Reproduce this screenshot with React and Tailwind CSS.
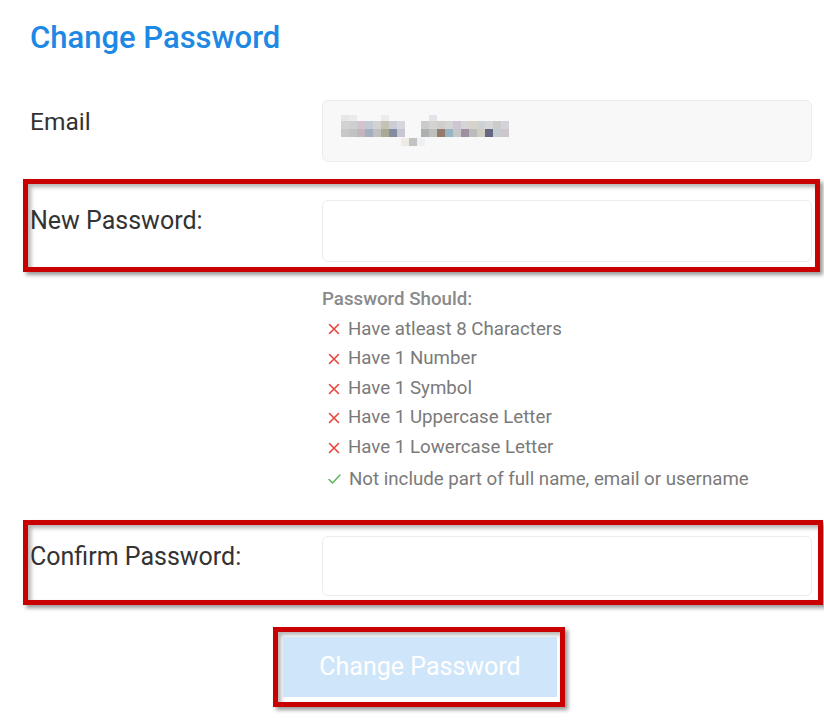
import React from "react";

const rules = [
  { ok: false, text: "Have atleast 8 Characters" },
  { ok: false, text: "Have 1 Number" },
  { ok: false, text: "Have 1 Symbol" },
  { ok: false, text: "Have 1 Uppercase Letter" },
  { ok: false, text: "Have 1 Lowercase Letter" },
  { ok: true, text: "Not include part of full name, email or username" },
];

// pixelated (blurred) email value
const mosaicTop = [
  "#e6e6e6", "#ebebef", "", "", "", "#efebeb", "", "", "", "", "", "#e6e2ea", "", "", "", "", "", "", "", "", "", "",
];
const mosaicRow1 = [
  "#d2d2d2", "#cfcfcf", "#d2c3cc", "#c2cad6", "#d2d2d2", "#c2c3b2", "#cdccd6", "#d6d7dc", "", "", "#cacbca", "#d3d4d2", "#d1cdca", "#d3d5d4", "#cfc5d5", "#d5d5d5", "#d7d3c9", "#cdd1d6", "#d6d6d6", "#cbcbcb", "#d3d4d9", "",
];
const mosaicRow2 = [
  "#c8c8c8", "#c1c3c3", "#c4b4be", "#a2afbf", "#c0c0c0", "#aaa993", "#838ca0", "#c8c5d4", "", "", "#adb0ae", "#bcc1bc", "#957a6e", "#98b3c4", "#c6c6c6", "#9f8fa2", "#bcbcbc", "#d0cdc2", "#65667f", "#c6cbd3", "#cdc7cc", "",
];
const mosaicBottom = { 8: "#f0eae5", 9: "#c3c3c3", 10: "#eef1f4" };

function Mosaic() {
  return (
    <svg width="176" height="32" viewBox="0 0 176 32">
      {mosaicTop.map((c, i) =>
        c ? <rect key={"t" + i} x={i * 8} y={0} width="8" height="6" fill={c} /> : null
      )}
      {mosaicRow1.map((c, i) =>
        c ? <rect key={"a" + i} x={i * 8} y={6} width="8" height="8" fill={c} /> : null
      )}
      {mosaicRow2.map((c, i) =>
        c ? <rect key={"b" + i} x={i * 8} y={14} width="8" height="8" fill={c} /> : null
      )}
      {Object.entries(mosaicBottom).map(([i, c]) => (
        <rect key={"c" + i} x={i * 8 - 4} y={23} width="8" height="8" fill={c} />
      ))}
    </svg>
  );
}

function CrossIcon() {
  return (
    <svg width="12" height="12" viewBox="0 0 12 12" className="shrink-0">
      <path d="M1.5 1.5 L10.5 10.5 M10.5 1.5 L1.5 10.5" stroke="#e8453c" strokeWidth="1.6" strokeLinecap="round" />
    </svg>
  );
}

function CheckIcon() {
  return (
    <svg width="13" height="12" viewBox="0 0 13 12" className="shrink-0">
      <path d="M1 6.5 L4.5 10 L12 2" fill="none" stroke="#5cb85c" strokeWidth="1.5" strokeLinecap="round" strokeLinejoin="round" />
    </svg>
  );
}

export default function App() {
  return (
    <div
      className="w-[824px] h-[722px] bg-white overflow-hidden pl-[30px] pr-[12px] pt-[20px]"
      style={{ fontFamily: "Roboto, 'Liberation Sans', sans-serif" }}
    >
      <h1 className="text-[31px] leading-[36px] font-medium text-[#1e88e5]">Change Password</h1>

      {/* Email */}
      <div className="mt-[44px] flex">
        <label className="w-[292px] mt-[8px] text-[24.5px] leading-[28px] text-[#333]">Email</label>
        <div className="w-[490px] h-[62px] rounded-md border border-[#ececec] bg-[#f8f8f8] flex items-center pl-[18px]">
          <Mosaic />
        </div>
      </div>

      {/* New password (annotated) */}
      <div className="mt-[17px] -ml-[7px] -mr-[8px] border-[5px] border-[#c80000] shadow-[3px_3px_4px_rgba(0,0,0,0.4),inset_3px_3px_4px_rgba(0,0,0,0.3)] pl-[2px] pr-[3px] pt-[16px] pb-[5px] flex">
        <label className="w-[292px] mt-[7px] text-[25px] leading-[28px] text-[#333]">New Password:</label>
        <input
          type="password"
          className="w-[490px] h-[62px] rounded-md border border-[#ececec] bg-white outline-none"
        />
      </div>

      {/* Rules */}
      <div className="mt-[13px] ml-[292px] text-[18.7px] leading-[29.6px]">
        <div className="font-medium text-[#8a8a8a]">Password Should:</div>
        {rules.map((r, i) => (
          <div
            key={i}
            className={`flex items-center gap-[8px] pl-[6px] text-[#7a7a7a] ${i === rules.length - 1 ? "mt-[2px]" : ""}`}
          >
            {r.ok ? <CheckIcon /> : <CrossIcon />}
            <span>{r.text}</span>
          </div>
        ))}
      </div>

      {/* Confirm password (annotated) */}
      <div className="mt-[26px] -ml-[7px] -mr-[11px] border-[5px] border-[#c80000] shadow-[3px_3px_4px_rgba(0,0,0,0.4),inset_3px_3px_4px_rgba(0,0,0,0.3)] pl-[2px] pr-[6px] pt-[11px] pb-[4px] flex">
        <label className="w-[292px] mt-[7px] text-[25px] leading-[28px] text-[#333]">Confirm Password:</label>
        <input
          type="password"
          className="w-[490px] h-[60px] rounded-md border border-[#ececec] bg-white outline-none"
        />
      </div>

      {/* Submit (annotated) */}
      <div className="mt-[22px] ml-[243px] w-[292px] border-[5px] border-[#c80000] shadow-[3px_3px_4px_rgba(0,0,0,0.4),inset_3px_3px_4px_rgba(0,0,0,0.3)] pl-[5px] pr-[3px] py-[5px]">
        <button
          type="button"
          disabled
          className="w-[274px] h-[60px] bg-[#cfe6fa] text-white text-[25px] leading-[30px]"
        >
          Change Password
        </button>
      </div>
    </div>
  );
}
